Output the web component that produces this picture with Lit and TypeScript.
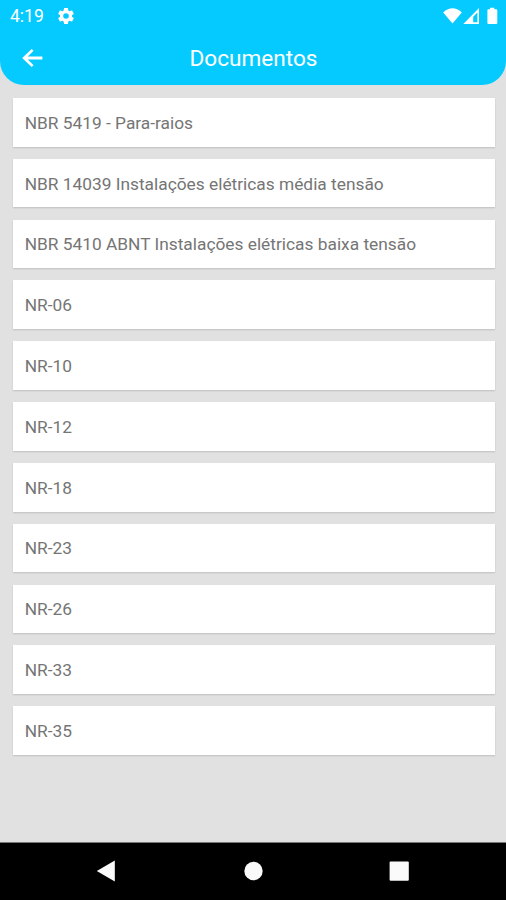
import { LitElement, html, css } from "lit";
import { customElement } from "lit/decorators.js";

const DOCUMENTS = [
  "NBR 5419 - Para-raios",
  "NBR 14039 Instalações elétricas média tensão",
  "NBR 5410 ABNT Instalações elétricas baixa tensão",
  "NR-06",
  "NR-10",
  "NR-12",
  "NR-18",
  "NR-23",
  "NR-26",
  "NR-33",
  "NR-35",
];

@customElement("app-root")
export class AppRoot extends LitElement {
  static styles = css`
    :host {
      display: flex;
      flex-direction: column;
      box-sizing: border-box;
      height: 900px;
      overflow: hidden;
      background: #e1e1e1;
      font-family: Roboto, "Liberation Sans", sans-serif;
    }
    .header {
      flex: none;
      height: 85.4px;
      background: #05caff;
      border-radius: 0 0 24px 24px;
      color: #fff;
    }
    .status {
      display: flex;
      align-items: center;
      height: 31px;
      padding: 0 8px 0 10px;
    }
    .time {
      width: 48px;
      font-size: 17.5px;
      line-height: 31px;
      padding-top: 1px;
    }
    .signals {
      display: flex;
      align-items: center;
      margin-left: auto;
    }
    svg {
      display: block;
      fill: currentColor;
    }
    .bar {
      display: grid;
      grid-template-columns: 48px 1fr 47px;
      align-items: center;
      height: 54px;
    }
    .back {
      padding-left: 22px;
      margin-top: -2px;
    }
    .title {
      text-align: center;
      font-size: 22.6px;
      line-height: 54px;
      padding-top: 1px;
    }
    .list {
      flex: 1;
      display: flex;
      flex-direction: column;
      gap: 12.2px;
      padding: 12.5px 11px 0 12.7px;
    }
    .card {
      flex: none;
      box-sizing: border-box;
      height: 48.65px;
      padding: 0.8px 12px 0;
      line-height: 48px;
      background: #fff;
      box-shadow: 0 1px 1.5px rgba(0, 0, 0, 0.15);
      color: #757575;
      font-size: 17.32px;
      white-space: nowrap;
    }
    .nav {
      flex: none;
      display: flex;
      align-items: center;
      height: 58.5px;
      background: #000;
      border-top: 1px solid #777;
      box-sizing: border-box;
      color: #fafafa;
    }
    .nav svg {
      width: 100%;
      height: 57px;
    }
  `;

  render() {
    return html`
      <header class="header">
        <div class="status">
          <span class="time">4:19</span>
          <svg width="16" height="16" viewBox="2 2 20 20">
            <path
              d="M19.43 12.98c.04-.32.07-.64.07-.98s-.03-.66-.07-.98l2.11-1.65c.19-.15.24-.42.12-.64l-2-3.46c-.12-.22-.39-.3-.61-.22l-2.49 1c-.52-.4-1.08-.73-1.69-.98l-.38-2.65C14.46 2.18 14.25 2 14 2h-4c-.25 0-.46.18-.49.42l-.38 2.65c-.61.25-1.17.59-1.69.98l-2.49-1c-.23-.09-.49 0-.61.22l-2 3.46c-.13.22-.07.49.12.64l2.11 1.65c-.04.32-.07.65-.07.98s.03.66.07.98l-2.11 1.65c-.19.15-.24.42-.12.64l2 3.46c.12.22.39.3.61.22l2.49-1c.52.4 1.08.73 1.69.98l.38 2.65c.03.24.24.42.49.42h4c.25 0 .46-.18.49-.42l.38-2.65c.61-.25 1.17-.59 1.69-.98l2.49 1c.23.09.49 0 .61-.22l2-3.46c.12-.22.07-.49-.12-.64l-2.11-1.65zM12 15.5a3.5 3.5 0 1 1 0-7 3.5 3.5 0 0 1 0 7z"
            />
          </svg>
          <div class="signals">
            <svg width="55" height="20" viewBox="443 5 55 20">
              <path d="M443.2 11.4Q452.5 3 461.8 11.4L452.5 22.4Z" />
              <path
                fill-rule="evenodd"
                d="M479 7V23H463.3ZM477.4 11.4L473.2 15.7V21.3H477.4Z"
              />
              <path
                d="M490 6.7H494.3V8.3H496.2Q497.3 8.3 497.3 9.4V22Q497.3 23 496.2 23H488.4Q487.4 23 487.4 22V9.4Q487.4 8.3 488.4 8.3H490Z"
              />
            </svg>
          </div>
        </div>
        <div class="bar">
          <svg class="back" width="22" height="20" viewBox="0 0 22 20">
            <path
              d="M20.4 8.6V11.4H5.8L11.6 17.2L9.7 19L.2 10L9.7 1L11.6 2.8L5.8 8.6Z"
            />
          </svg>
          <span class="title">Documentos</span>
        </div>
      </header>
      <main class="list">
        ${DOCUMENTS.map((name) => html`<div class="card">${name}</div>`)}
      </main>
      <nav class="nav">
        <svg viewBox="0 843 506 57">
          <path d="M96.8 871L114.8 860.6V881.4Z" />
          <circle cx="253.5" cy="871" r="9.2" />
          <rect x="389.6" y="861.5" width="19.2" height="19.2" rx="1" />
        </svg>
      </nav>
    `;
  }
}
